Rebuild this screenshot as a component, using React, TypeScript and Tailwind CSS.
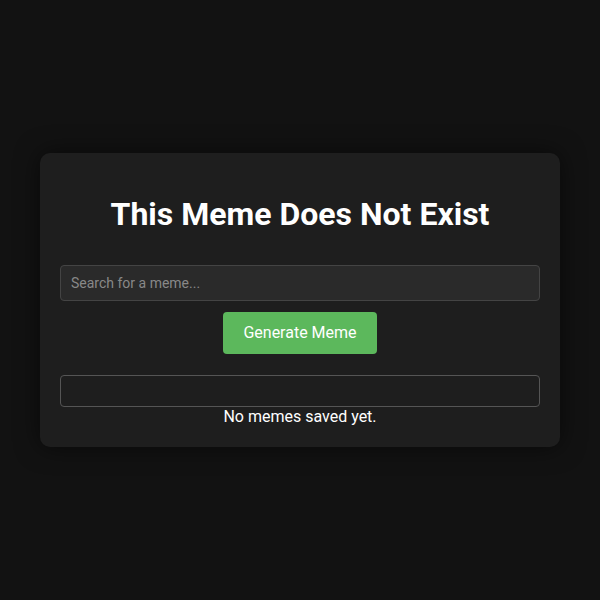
export default function App() {
  return (
    <div
      className="min-h-screen bg-[#121212] flex items-center justify-center text-white"
      style={{ fontFamily: 'Roboto, "Liberation Sans", sans-serif' }}
    >
      <div className="w-[520px] bg-[#1e1e1e] rounded-[10px] px-5 pt-[42px] pb-5 shadow-[0_0_24px_rgba(0,0,0,0.55)] flex flex-col items-center">
        <h1 className="text-[32px] leading-[38px] font-bold text-center">This Meme Does Not Exist</h1>

        <input
          type="text"
          placeholder="Search for a meme..."
          className="mt-[32px] w-full h-9 px-[10px] bg-[#2a2a2a] border border-[#444] rounded-[4px] text-sm text-white placeholder:text-[#888] outline-none"
        />

        <button className="mt-[11px] h-[42px] px-5 bg-[#5cb85c] rounded-[4px] text-base text-white">
          Generate Meme
        </button>

        <div className="mt-[21px] w-full h-8 border border-[#555] rounded-[4px]" />

        <p className="text-base leading-5 text-center">No memes saved yet.</p>
      </div>
    </div>
  );
}
